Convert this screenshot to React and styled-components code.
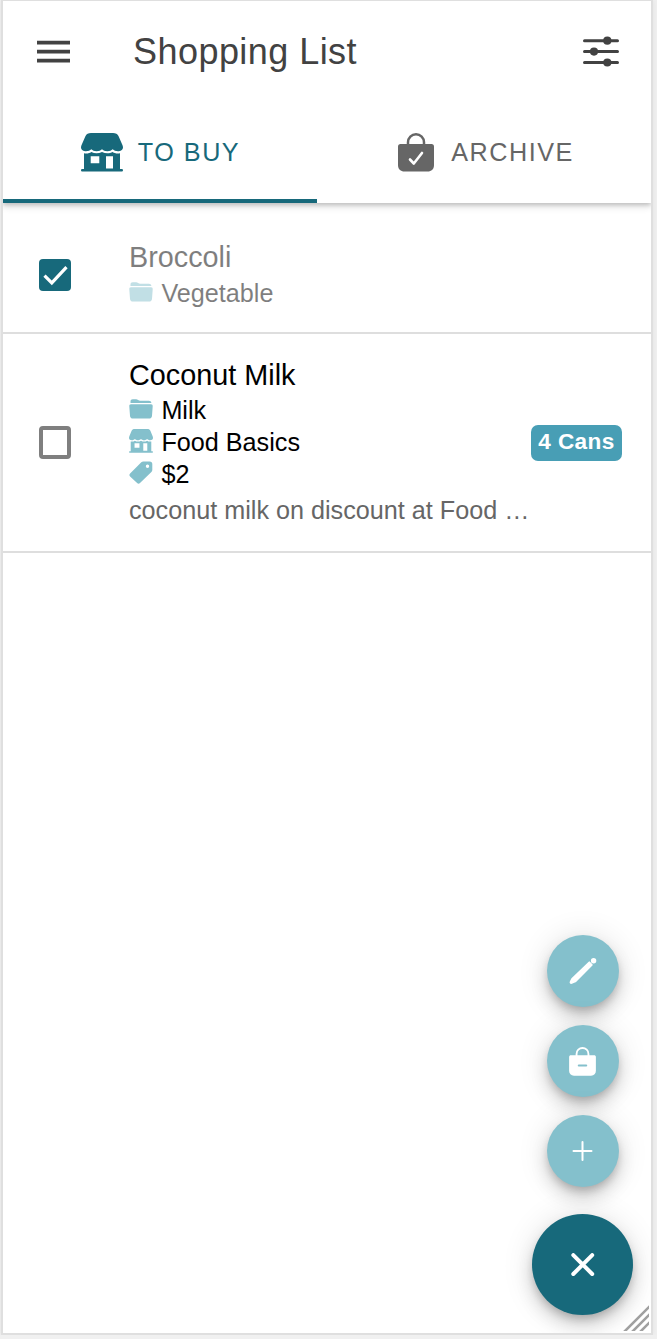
import React from "react";
import styled, { createGlobalStyle } from "styled-components";

const teal = "#17697b";
const lightTeal = "#84c0cc";

const GlobalStyle = createGlobalStyle`
  * { box-sizing: border-box; }
  body {
    margin: 0;
    background: #f0f0f0;
    font-family: "Liberation Sans", Arial, sans-serif;
    overflow: hidden;
  }
  button { font: inherit; border: 0; padding: 0; margin: 0; background: none; }
  svg { display: block; flex: none; }
`;

const Frame = styled.div`
  position: relative;
  width: 652px;
  height: 1335px;
  margin-left: 1px;
  border: 2px solid #dfdfdf;
  border-top-width: 1px;
  background: #fff;
  overflow: hidden;
  box-shadow: 0 0 6px rgba(0, 0, 0, 0.06);
`;

const Header = styled.header`
  position: relative;
  height: 202px;
  background: #fff;
  box-shadow: 0 2px 4px rgba(0, 0, 0, 0.16), 0 4px 7px rgba(0, 0, 0, 0.12);
`;

const Toolbar = styled.div`
  display: flex;
  align-items: center;
  height: 101px;
  padding: 0 32px 0 34px;
  color: #424242;
`;

const Title = styled.h1`
  flex: 1;
  margin: 0 0 0 63px;
  font-size: 36px;
  font-weight: 400;
  line-height: 44px;
  letter-spacing: 0.45px;
`;

const IconButton = styled.button`
  display: flex;
  color: #424242;
`;

const Tabs = styled.nav`
  display: flex;
  height: 101px;
`;

const Tab = styled.button`
  display: flex;
  align-items: center;
  justify-content: center;
  gap: ${(p) => p.$gap}px;
  width: ${(p) => p.$width}px;
  padding-top: 4px;
  padding-left: ${(p) => p.$shift || 0}px;
  border-bottom: 4px solid ${(p) => (p.$active ? teal : "transparent")};
  color: ${(p) => (p.$active ? teal : "#666")};
  font-size: 25.2px;
  letter-spacing: 1.5px;
`;

const List = styled.main`
  padding-top: 3px;
`;

const Row = styled.section`
  display: flex;
  align-items: center;
  height: ${(p) => p.$height}px;
  padding: ${(p) => p.$top}px 29px ${(p) => p.$bottom || 0}px 36px;
  border-bottom: 2px solid #dedede;
`;

const Checkbox = styled.span`
  display: flex;
  flex: none;
  width: 32px;
  height: ${(p) => (p.$checked ? 32 : 33)}px;
  margin-right: 58px;
  margin-top: ${(p) => p.$nudge}px;
  border-radius: 4px;
  border: ${(p) => (p.$checked ? "0" : "4px solid #7f7f7f")};
  background: ${(p) => (p.$checked ? teal : "transparent")};
`;

const Details = styled.div`
  flex: none;
  width: 402px;
  opacity: ${(p) => (p.$done ? 0.5 : 1)};
`;

const Name = styled.h2`
  margin: 0 0 ${(p) => p.$gap}px;
  font-size: 28.8px;
  font-weight: 400;
  line-height: 34px;
  color: #000;
`;

const Meta = styled.div`
  display: flex;
  align-items: center;
  gap: 8px;
  height: 32px;
  padding-left: 0.4px;
  color: #000;
  font-size: 25.2px;
  line-height: 32px;

  svg { margin-top: -2px; color: ${lightTeal}; }
`;

const Note = styled.p`
  margin: 4px 0 0;
  color: #666;
  font-size: 25.2px;
  line-height: 32px;
  white-space: nowrap;
`;

const Badge = styled.span`
  flex: none;
  width: 91px;
  height: 36px;
  margin-top: 3px;
  border-radius: 7px;
  background: #489eb5;
  color: #fff;
  font-size: 22.6px;
  font-weight: 700;
  line-height: 34px;
  letter-spacing: 0.4px;
  text-align: center;
`;

const FabStack = styled.div`
  position: absolute;
  right: 18px;
  bottom: 18px;
  display: flex;
  flex-direction: column;
  align-items: center;
  gap: 18px;
`;

const Fab = styled.button`
  display: flex;
  align-items: center;
  justify-content: center;
  width: ${(p) => (p.$main ? 101 : 72)}px;
  height: ${(p) => (p.$main ? 101 : 72)}px;
  margin-top: ${(p) => (p.$main ? 9 : 0)}px;
  border-radius: 50%;
  background: ${(p) => (p.$main ? teal : lightTeal)};
  color: #fff;
  box-shadow: 0 5.4px 9px -1.8px rgba(0, 0, 0, 0.2),
    0 10.8px 18px 0 rgba(0, 0, 0, 0.14), 0 1.8px 32.4px 0 rgba(0, 0, 0, 0.12);
`;

const Grip = styled.svg`
  position: absolute;
  right: 2px;
  bottom: 2px;
`;

const MenuIcon = () => (
  <svg width="33" height="23" viewBox="0 0 33 23" fill="currentColor">
    <path d="M0 .7h33v3.700H0zM0 9.700h33v3.700H0zM0 18.700h33v3.700H0z" />
  </svg>
);

const SlidersIcon = () => (
  <svg width="36" height="32" viewBox="0 0 36 32" fill="currentColor">
    <path
      d="M1.500 4.700h33M1.500 15.600h33M1.500 26.500h33"
      stroke="currentColor"
      strokeWidth="3"
      strokeLinecap="round"
    />
    <circle cx="24.300" cy="4.700" r="4.100" />
    <circle cx="11" cy="15.600" r="4.100" />
    <circle cx="24.300" cy="26.500" r="4.100" />
  </svg>
);

const StoreIcon = ({ width, height }) => (
  <svg width={width} height={height} viewBox="0 0 42 39" preserveAspectRatio="none" fill="currentColor">
    <path d="M10 0h22c2.600 0 4.600 1 5.600 3.200l3.600 8.200c.5 1.200.8 2 .8 3.200 0 2.300-2.500 3.700-5 3.700-2.400 0-4-1-5.300-2-1.400 1-2.800 2-5.300 2s-4.100-1-5.400-2c-1.300 1-2.900 2-5.400 2s-3.900-1-5.300-2C9 17.300 7.400 18.300 5 18.300c-2.500 0-5-1.400-5-3.700 0-1.200.3-2 .8-3.200l3.600-8.200C5.400 1 7.400 0 10 0z" />
    <path
      fillRule="evenodd"
      d="M3 20.200c3 .6 5.500 0 7.300-1.300 3.300 1.900 7.300 1.900 10.700 0 3.400 1.900 7.400 1.900 10.700 0 1.800 1.300 4.300 1.900 7.300 1.300v15.800h1.800c1.600 0 1.600 2.500 0 2.500H1.200c-1.600 0-1.600-2.500 0-2.500H3zM9.700 23.300v7h8.600v-7zM25 23.300v12.200h7V23.300z"
    />
  </svg>
);

const BagIcon = ({ width, height, mark, markColor, markWidth }) => (
  <svg width={width} height={height} viewBox="0 0 36 39" fill="none">
    <path d="M10 13V9.300a8 8 0 0 1 16 0V13" stroke="currentColor" strokeWidth="2.500" />
    <path
      d="M2.500 11h31c1.600 0 2.500.9 2.500 2.500V32c0 4.200-2.500 6.500-6.500 6.500h-23C2.500 38.500 0 36.200 0 32V13.500C0 11.900.9 11 2.500 11z"
      fill="currentColor"
    />
    <path
      d={mark}
      stroke={markColor}
      strokeWidth={markWidth}
      strokeLinecap="round"
      strokeLinejoin="round"
    />
  </svg>
);

const CheckIcon = () => (
  <svg width="32" height="32" viewBox="0 0 32 32" fill="none">
    <path d="M5.500 16.700l7.300 7.200L27.500 8.200" stroke="#fff" strokeWidth="3.200" />
  </svg>
);

const FolderIcon = () => (
  <svg width="24" height="20" viewBox="0 0 24 20" fill="currentColor">
    <path d="M1.500 4V2.500C1.500 1 2.400.3 3.800.3h3.300c.8 0 1.300.2 2 .7.700.5 1.100.7 2 .7h8.800c1.400 0 2.300.8 2.500 2.300z" />
    <path d="M2 5.300h20c1.300 0 1.800.8 1.700 2L23 16.700c-.1 1.900-1.200 2.800-2.900 2.800H3.900c-1.700 0-2.800-.9-2.900-2.800L.3 7.300c-.1-1.200.4-2 1.700-2z" />
  </svg>
);

const TagIcon = () => (
  <svg width="24" height="23" viewBox="0 0 24 23" fill="currentColor">
    <path
      fillRule="evenodd"
      d="M14.300.5h6.400c1.600 0 2.600 1 2.600 2.500v6c0 .8-.3 1.400-.9 2L11 22.100c-.9.900-2 .9-2.900 0l-7-6.700c-.9-.9-.9-2 0-2.900L12.300 1.300c.6-.6 1.200-.8 2-.8zM18.500 3.500a1.700 1.700 0 1 0 0 3.400 1.700 1.700 0 0 0 0-3.400z"
    />
  </svg>
);

const PencilIcon = () => (
  <svg width="28" height="28" viewBox="0 0 28 28" fill="currentColor">
    <path
      d="M20.300 5.300l2.500 2.500L6.200 24.500l-3.600 1.500c-.8.300-1.300-.2-1-1l1.500-3z"
      stroke="currentColor"
      strokeWidth="1.800"
      strokeLinejoin="round"
    />
    <circle cx="24.600" cy="3.800" r="2.700" />
  </svg>
);

const PlusIcon = () => (
  <svg width="22" height="22" viewBox="0 0 22 22">
    <path d="M10.500 2v18M1.500 11h18" stroke="currentColor" strokeWidth="2" strokeLinecap="round" />
  </svg>
);

const CloseIcon = () => (
  <svg width="24" height="24" viewBox="0 0 24 24">
    <path d="M2.300 2.100l18.900 18.900M21.200 2.100L2.300 21" stroke="currentColor" strokeWidth="4" strokeLinecap="round" />
  </svg>
);

export default function App() {
  return (
    <>
      <GlobalStyle />
      <Frame>
        <Header>
          <Toolbar>
            <IconButton aria-label="Menu"><MenuIcon /></IconButton>
            <Title>Shopping List</Title>
            <IconButton aria-label="Filters"><SlidersIcon /></IconButton>
          </Toolbar>
          <Tabs>
            <Tab $active $width={314} $gap={15} $shift={1}>
              <StoreIcon width={42} height={39} />
              TO BUY
            </Tab>
            <Tab $width={334} $gap={17} $shift={4}>
              <BagIcon width={36} height={39} mark="M12 26.500l3.800 4L24 20" markColor="#fff" markWidth={2.6} />
              ARCHIVE
            </Tab>
          </Tabs>
        </Header>
        <List>
          <Row $height={128} $top={10}>
            <Checkbox $checked $nudge={2}><CheckIcon /></Checkbox>
            <Details $done>
              <Name $gap={3}>Broccoli</Name>
              <Meta><FolderIcon />Vegetable</Meta>
            </Details>
          </Row>
          <Row $height={219} $top={0} $bottom={2}>
            <Checkbox $nudge={2} />
            <Details>
              <Name $gap={2}>Coconut Milk</Name>
              <Meta><FolderIcon />Milk</Meta>
              <Meta><StoreIcon width={24} height={24} />Food Basics</Meta>
              <Meta><TagIcon />$2</Meta>
              <Note>coconut milk on discount at Food …</Note>
            </Details>
            <Badge>4 Cans</Badge>
          </Row>
        </List>
        <FabStack>
          <Fab aria-label="Edit"><PencilIcon /></Fab>
          <Fab aria-label="Archive purchased">
            <BagIcon width={27} height={29} mark="M13 24.800h10" markColor={lightTeal} markWidth={2.8} />
          </Fab>
          <Fab aria-label="Add"><PlusIcon /></Fab>
          <Fab $main aria-label="Close"><CloseIcon /></Fab>
        </FabStack>
        <Grip width="26" height="26" viewBox="0 0 26 26">
          <path d="M0 28L28 0M8 28L28 8M16 28L28 16" stroke="#a0a0a0" strokeWidth="2.600" />
        </Grip>
      </Frame>
    </>
  );
}
